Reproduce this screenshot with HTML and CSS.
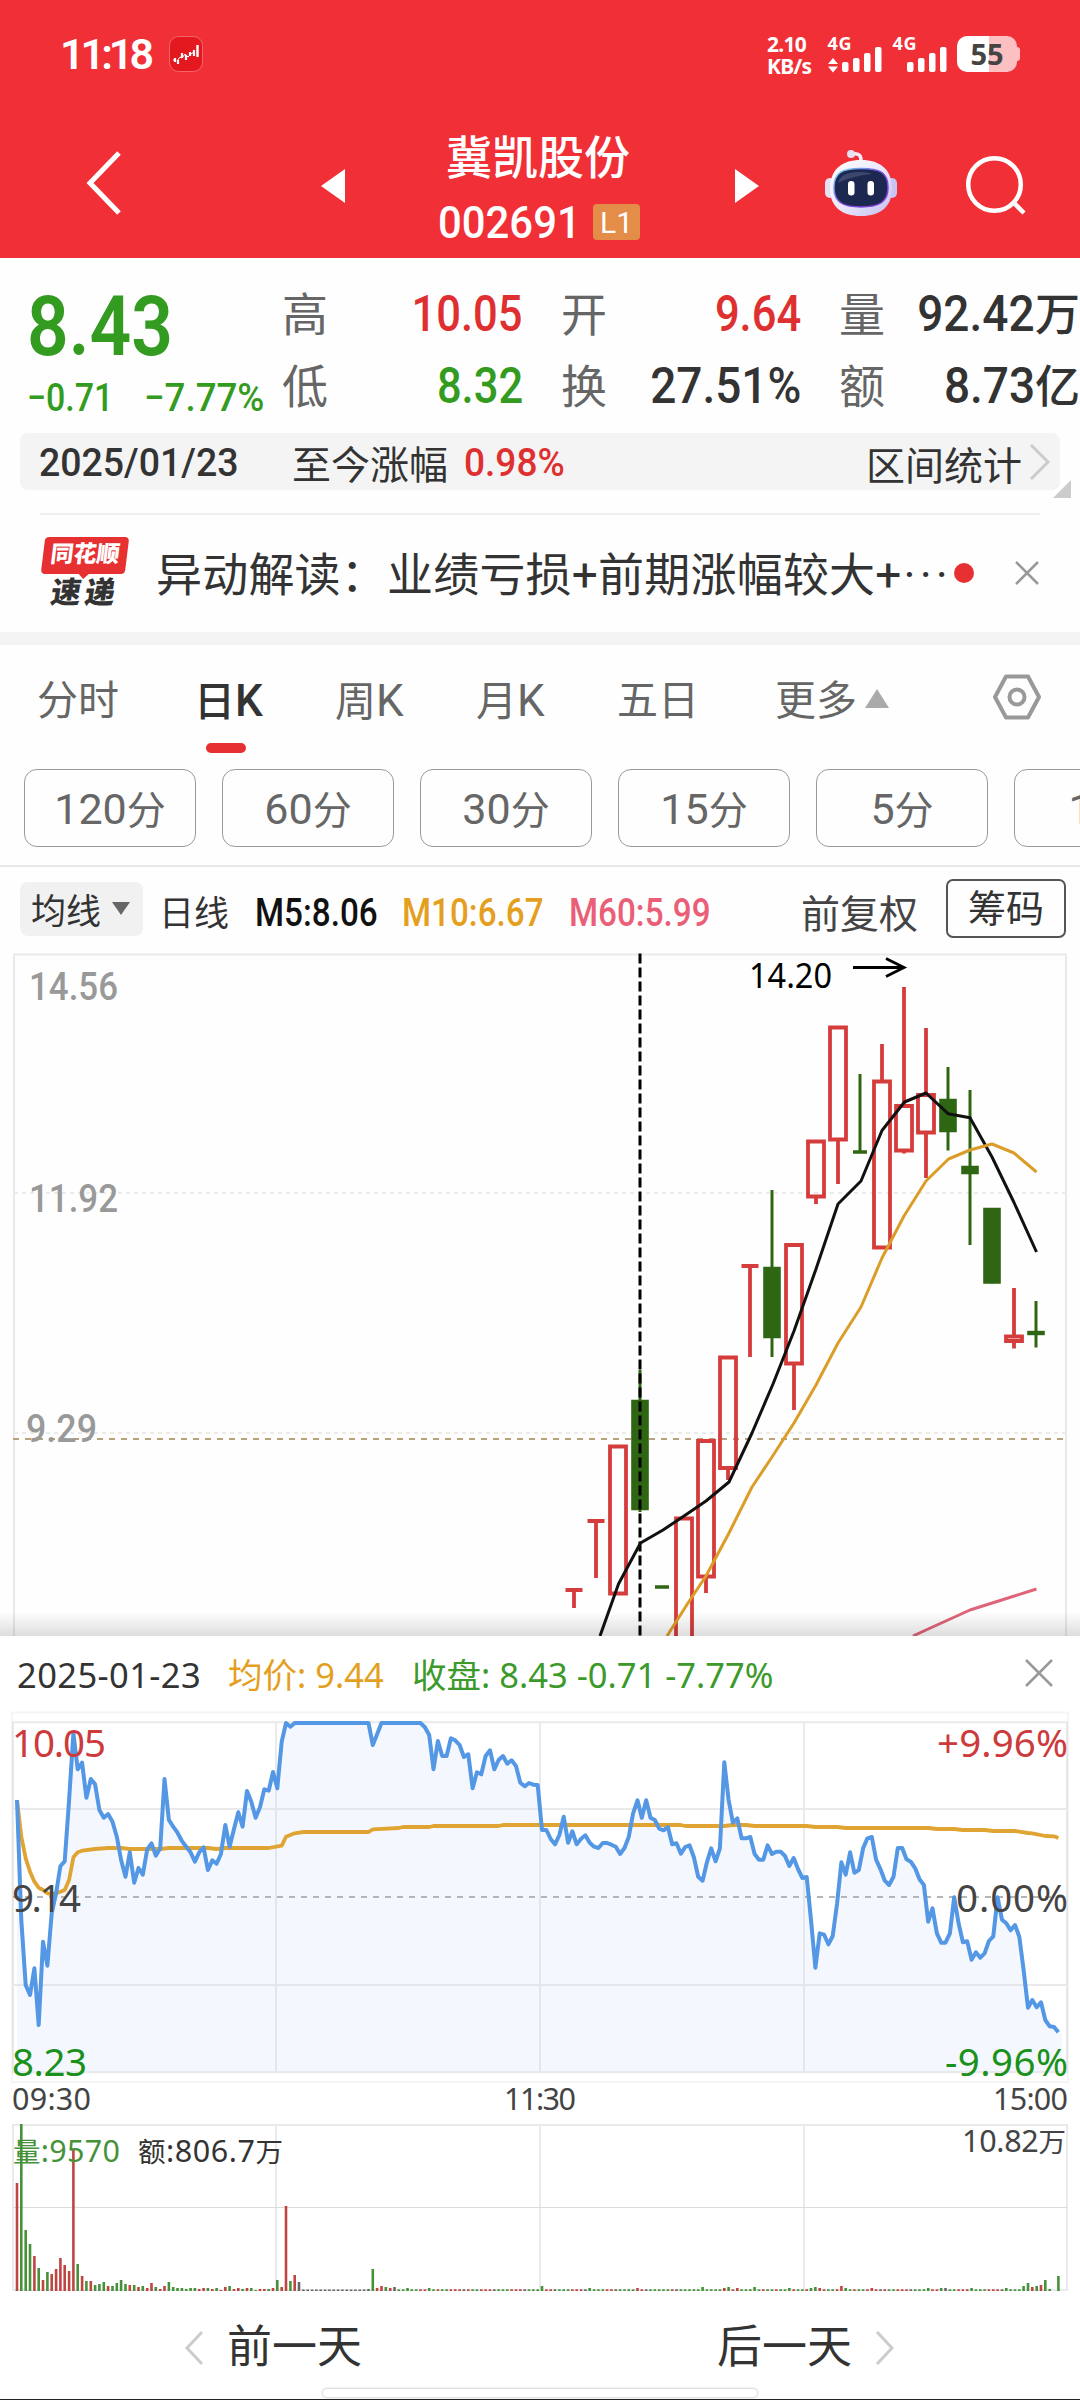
FILE: index.html
```
<!DOCTYPE html>
<html lang="zh-CN">
<head>
  <meta charset="UTF-8" />
  <meta name="viewport" content="width=device-width, initial-scale=1.0" />
  <title>冀凯股份 002691</title>
  <link rel="stylesheet" href="styles.css">
</head>
<body>
  <header class="header">
    <div class="status">
      <span class="clock">11:18</span>
      <svg class="app-icon" width="34" height="36" viewBox="0 0 34 36">
        <rect x="0.5" y="0.5" width="33" height="35" rx="9" fill="#e3191f" stroke="#f2666a"/>
        <path d="M4 24h3M8 25l3-4 2 1 3-4 3 3 3-3 3-2" fill="none" stroke="#fff" stroke-width="1"/>
        <path d="M6 22v4M9 24v4M13 17v5M17 19v5M21 16v4M25 14v6" stroke="#fff" stroke-width="2.2"/>
        <path d="M28.500 9v12" stroke="#fff" stroke-width="2.400" fill="none"/>
      </svg>
      <div class="speed"><span>2.10</span><span>KB/s</span></div>
      <svg class="signals" width="124" height="44" viewBox="826 32 124 44">
        <g fill="#fff">
          <text x="827.5" y="50" class="net" textLength="24">4G</text>
          <text x="892.5" y="50" class="net" textLength="24">4G</text>
          <path d="M828 64l5-6 5 6zM828 66.500l5 6 5-6z"/>
          <rect x="842" y="62" width="6.500" height="10" rx="2"/>
          <rect x="853" y="58" width="6.500" height="14" rx="2"/>
          <rect x="864" y="53" width="6.500" height="19" rx="2"/>
          <rect x="875" y="47" width="6.500" height="25" rx="2"/>
          <rect x="907" y="62" width="6.500" height="10" rx="2"/>
          <rect x="918" y="58" width="6.500" height="14" rx="2"/>
          <rect x="929" y="53" width="6.500" height="19" rx="2"/>
          <rect x="940" y="47" width="6.500" height="25" rx="2"/>
        </g>
      </svg>
      <div class="battery">55</div>
    </div>
    <div class="titlebar">
      <svg class="back" width="40" height="70" viewBox="0 0 40 70"><path d="M36 5L7 35l29 30" fill="none" stroke="#fff" stroke-width="5"/></svg>
      <svg class="prev" width="24" height="34"><path d="M24 0v34L0 17z" fill="#fff"/></svg>
      <div class="stock">
        <div class="stock-name">冀凯股份</div>
        <div class="stock-code"><span class="code">002691</span><span class="level">L1</span></div>
      </div>
      <svg class="next" width="24" height="34"><path d="M0 0v34l24-17z" fill="#fff"/></svg>
      <svg class="robot" width="74" height="68" viewBox="824 149 74 68">
        <defs>
          <linearGradient id="shell" x1="0" y1="0" x2="1" y2="1">
            <stop offset="0" stop-color="#fff"/><stop offset="0.5" stop-color="#ece8fa"/><stop offset="1" stop-color="#c3bdf0"/>
          </linearGradient>
          <linearGradient id="rim" x1="0" y1="0" x2="1" y2="1">
            <stop offset="0" stop-color="#6fe0f5"/><stop offset="0.5" stop-color="#7a4be0"/><stop offset="1" stop-color="#8a3bd8"/>
          </linearGradient>
        </defs>
        <path d="M852 154q10-2 9 8" fill="none" stroke="#f1ecfb" stroke-width="3.500"/>
        <circle cx="851" cy="154" r="4" fill="#e9dff3"/>
        <rect x="825" y="178" width="10" height="20" rx="5" fill="#e6e0f5"/>
        <rect x="887" y="178" width="10" height="20" rx="5" fill="#c9c4f2"/>
        <path d="M861 160c20 0 31 10 31 29 0 17-11 27-31 27s-31-10-31-27c0-19 11-29 31-29z" fill="url(#shell)"/>
        <path d="M861 168.500c19 0 27 4 27 19 0 14-8 19.500-27 19.500s-27-5.500-27-19.500c0-15 8-19 27-19z" fill="#1d2850" stroke="url(#rim)" stroke-width="1.500"/>
        <path d="M838 183q2-11 22-11 8 0 12 2-20 2-34 9z" fill="#4a547a" opacity="0.7"/>
        <rect x="848" y="181" width="6.500" height="14.500" rx="3.200" fill="#fff"/>
        <rect x="867.500" y="181" width="6.500" height="14.500" rx="3.200" fill="#fff"/>
      </svg>
      <svg class="search" width="62" height="62" viewBox="964 154 62 62"><g fill="none" stroke="#fff" stroke-width="4.500"><circle cx="994.500" cy="184.500" r="26.300"/><path d="M1013 202l11 11"/></g></svg>
    </div>
  </header>

  <section class="quote">
    <div class="price-box">
      <div class="price green"><span class="num">8.43</span></div>
      <div class="change green"><span class="num">−0.71</span><span class="num pct">−7.77%</span></div>
    </div>
    <div class="stats">
      <div class="stat"><label>高</label><b class="red num">10.05</b></div>
      <div class="stat"><label>开</label><b class="red num">9.64</b></div>
      <div class="stat"><label>量</label><b class="num wide">92.42</b><i>万</i></div>
      <div class="stat"><label>低</label><b class="green num">8.32</b></div>
      <div class="stat"><label>换</label><b class="num wide">27.51%</b></div>
      <div class="stat"><label>额</label><b class="num wide">8.73</b><i>亿</i></div>
    </div>
  </section>

  <div class="range">
    <span class="range-date">2025/01/23</span>
    <span class="range-label">至今涨幅</span>
    <span class="range-value red">0.98%</span>
    <span class="range-link">区间统计</span>
    <svg width="22" height="38" viewBox="0 0 22 38"><path d="M2 2l17 17L2 36" fill="none" stroke="#ccc" stroke-width="3"/></svg>
    <i class="corner"></i>
  </div>

  <div class="news">
    <div class="logo">
      <div class="logo-top">同花顺</div>
      <div class="logo-bottom">速递</div>
    </div>
    <span class="news-text">异动解读：业绩亏损+前期涨幅较大+<em>···</em></span>
    <i class="dot"></i>
    <svg width="24" height="24" viewBox="0 0 24 24"><path d="M1 1l22 22M23 1L1 23" stroke="#999" stroke-width="2.500"/></svg>
  </div>

  <nav class="tabs">
    <span class="tab t1">分时</span>
    <span class="tab t2 active">日<b>K</b></span>
    <span class="tab t3">周<b>K</b></span>
    <span class="tab t4">月<b>K</b></span>
    <span class="tab t5">五日</span>
    <span class="tab t6">更多<svg width="24" height="19"><path d="M12 0l12 19H0z" fill="#aaa"/></svg></span>
    <svg class="gear" width="50" height="48" viewBox="0 0 50 48"><g fill="none" stroke="#999"><path d="M14 3.500h22L47 24 36 44.500H14L3 24z" stroke-width="4" stroke-linejoin="round"/><circle cx="25" cy="24" r="7.500" stroke-width="4"/></g></svg>
  </nav>

  <div class="periods">
    <span><b>120</b>分</span><span><b>60</b>分</span><span><b>30</b>分</span><span><b>15</b>分</span><span><b>5</b>分</span><span><b>1</b>分</span>
  </div>

  <div class="ma-bar">
    <span class="ma-select">均线<svg width="18" height="13"><path d="M0 0h18L9 13z" fill="#666"/></svg></span>
    <span class="ma-name">日线</span>
    <span class="ma m5">M5:8.06</span>
    <span class="ma m10">M10:6.67</span>
    <span class="ma m60">M60:5.99</span>
    <span class="fq">前复权</span>
    <span class="chips">筹码</span>
  </div>

  <div class="kline">
    <svg id="kline" width="1080" height="688" viewBox="0 948 1080 688">
      <path class="frame" d="M14 1640V954.500h1052V1640"/>
      <path class="grid-dash" d="M14 1193h1052M14 1433h1052"/>
      <path class="cost" d="M13 1439h1053"/>
      <g class="axis">
        <text x="29" y="1000" textLength="89" lengthAdjust="spacingAndGlyphs">14.56</text>
        <text x="29" y="1212" textLength="89" lengthAdjust="spacingAndGlyphs">11.92</text>
        <text x="26" y="1442" textLength="71" lengthAdjust="spacingAndGlyphs">9.29</text>
      </g>
      <g id="candles"></g>
      <path class="cursor" d="M640 953.500V1636"/>
      <polyline class="line ma5" points="600,1636 618.5,1584 640.5,1543 663,1530 684,1516 706,1501 729,1482 752,1433 773,1384 794,1331 816,1269 838,1204 861,1181 882,1130.5 904.500,1102 926,1093 948,1113.7 970,1117.7 992,1157 1014,1202.5 1036.500,1252"/>
      <polyline class="line ma10" points="667,1636 688,1603 706,1576 729,1533 752,1487 772,1457 794,1423 816,1385 838,1343 861,1307 882,1258 904,1216 926,1181 948.500,1159 970,1150 992,1144 1014,1153 1036.500,1172"/>
      <polyline class="line ma60" points="913,1636 926,1630 970,1610 1036.500,1589"/>
      <text class="peak" x="749" y="988" textLength="83" lengthAdjust="spacingAndGlyphs">14.20</text>
      <path class="arrow" d="M853 967.500h50M886 958.500l18 9-18 9"/>
    </svg>
  </div>

  <section class="day">
    <div class="day-head">
      <span class="date">2025-01-23</span>
      <span class="avg">均价: 9.44</span>
      <span class="close-price">收盘: 8.43 -0.71 -7.77%</span>
      <svg width="28" height="28" viewBox="0 0 28 28"><path d="M1 1l26 26M27 1L1 27" stroke="#999" stroke-width="2.500"/></svg>
    </div>
    <svg id="intraday" width="1080" height="602" viewBox="0 1706 1080 602">
      <rect class="outer" x="12" y="1712.500" width="1056" height="369.500"/>
      <path id="area"/>
      <path class="frame" d="M13 1722.300h1054v350H13zM13 1809h1054M13 1985h1054M276 1722v350M540 1722v350M804 1722v350"/>
      <path class="zero" d="M13 1897h1054"/>
      <polyline id="avg-line"/>
      <polyline id="price-line"/>
      <g class="labels">
        <text class="up" x="12" y="1757" textLength="94">10.05</text>
        <text x="12" y="1911.500" textLength="69">9.14</text>
        <text class="down" x="12" y="2076" textLength="75">8.23</text>
        <text class="up" x="937" y="1757" textLength="131">+9.96%</text>
        <text x="956" y="1911.500" textLength="112">0.00%</text>
        <text class="down" x="945" y="2076" textLength="123">-9.96%</text>
      </g>
      <g class="times">
        <text x="12" y="2110" textLength="79">09:30</text>
        <text x="504" y="2110" textLength="72">11:30</text>
        <text x="993" y="2110" textLength="75">15:00</text>
      </g>
      <path class="frame" d="M13 2290V2125h1054v165zM276 2125v165M540 2125v165M804 2125v165"/>
      <path class="mid" d="M13 2207.500h1054"/>
      <g id="volume"></g>
      <g class="vol-text">
        <text x="13" y="2162" class="vol-green" textLength="107"><tspan class="cjk">量</tspan>:9570</text>
        <text x="138" y="2162" textLength="145"><tspan class="cjk">额</tspan>:806.7<tspan class="cjk">万</tspan></text>
        <text x="962" y="2152" class="vol-max" textLength="104"><tspan>10.82</tspan><tspan class="cjk">万</tspan></text>
      </g>
    </svg>
    <div class="pager">
      <span class="page"><svg width="20" height="36" viewBox="0 0 20 36"><path d="M18 2L3 18l15 16" fill="none" stroke="#ccc" stroke-width="3"/></svg>前一天</span>
      <span class="page">后一天<svg width="20" height="36" viewBox="0 0 20 36"><path d="M2 2l15 16L2 34" fill="none" stroke="#ccc" stroke-width="3"/></svg></span>
    </div>
    <div class="home"></div>
  </section>

  <script src="script.js"></script>
</body>
</html>
```
FILE: styles.css
```
* {
  box-sizing: border-box;
}
body {
  margin: 0;
  width: 1080px;
  height: 2400px;
  overflow: hidden;
  background: #fefefe;
  color: #333;
  font-family: Roboto, "Noto Sans CJK SC", sans-serif;
  display: flex;
  flex-direction: column;
}
svg {
  display: block;
  flex: none;
}
b, i, em {
  font-style: normal;
  font-weight: inherit;
}
span {
  white-space: nowrap;
}
.red { color: #df3031; }
.green { color: #339b20; }
.num {
  display: inline-block;
  transform: scaleX(0.87);
  transform-origin: right;
}

/* header */
.header {
  height: 258px;
  flex: none;
  background: #f12f37;
  color: #fff;
}
.status {
  height: 108px;
  padding: 0 63px 0 60px;
  display: flex;
  align-items: center;
}
.clock {
  width: 109px;
  font-size: 43px;
  font-weight: 600;
  letter-spacing: -4px;
}
.speed {
  display: flex;
  flex-direction: column;
  margin: 1px 13px 0 auto;
  width: 46px;
  font: 700 21px/22px "Noto Sans", sans-serif;
  letter-spacing: -0.7px;
}
.net {
  font: 700 18px "Noto Sans", sans-serif;
}
.signals {
  margin-right: 7px;
}
.battery {
  width: 60px;
  height: 36px;
  border-radius: 10px;
  background: linear-gradient(90deg, #fff 53%, #fcbfc2 53%);
  color: #444;
  font: 700 29px/36px "Noto Sans", sans-serif;
  text-align: center;
  position: relative;
}
.battery::after {
  content: "";
  position: absolute;
  left: 60px;
  top: 11px;
  width: 3px;
  height: 14px;
  background: #fcbfc2;
  border-radius: 0 3px 3px 0;
}
.titlebar {
  height: 150px;
  display: flex;
  align-items: center;
  padding: 0 54px 0 83px;
}
.back { margin-right: 198px; }
.prev { margin: 6px 88px 0 0; }
.stock {
  width: 210px;
  padding-top: 16px;
  text-align: center;
}
.stock-name {
  font-size: 46px;
  line-height: 64px;
  margin-top: -2px;
  font-weight: 500;
}
.stock-code {
  display: flex;
  align-items: center;
  height: 64px;
  margin-left: 5px;
}
.code {
  font-size: 45px;
  font-weight: 500;
  width: 155px;
  text-align: left;
  transform: scaleX(0.93);
  transform-origin: left;
}
.level {
  width: 47px;
  height: 36px;
  border-radius: 4px;
  background: #e38d48;
  font-size: 30px;
  line-height: 37px;
}
.next { margin: 6px 0 0 92px; }
.robot { margin: 0 66px 0 auto; }
.search { margin-top: 4px; }

/* quote */
.quote {
  height: 175px;
  flex: none;
  display: flex;
}
.price-box {
  width: 283px;
  padding: 19px 0 0 27px;
}
.price-box .num {
  transform-origin: left;
}
.price {
  font-size: 84px;
  line-height: 100px;
  font-weight: 600;
}
.change {
  font-size: 39px;
  line-height: 44px;
  margin-top: -1px;
  display: flex;
  font-weight: 500;
}
.change .num {
  width: 117px;
}
.change .pct {
  transform: scaleX(0.94);
}
.stats {
  flex: 1;
  display: grid;
  grid-template-columns: 240px 239px 240px;
  grid-template-rows: 72px 72px;
  column-gap: 39px;
  padding-top: 20px;
}
.stat {
  display: flex;
  align-items: center;
  font-size: 50px;
}
.stat label {
  font-size: 46px;
  color: #666;
  margin: -6px auto 0 -1px;
}
.stat b {
  font-weight: 500;
}
.stat .wide {
  transform: scaleX(0.92);
}
.stat i {
  font-size: 45px;
  font-weight: 500;
  margin-top: -5px;
}

/* date range bar */
.range {
  position: relative;
  flex: none;
  height: 57px;
  margin: 0 20px;
  padding: 0 9px 0 19px;
  border-radius: 8px;
  background: #f4f4f4;
  display: flex;
  align-items: center;
  font-size: 39px;
}
.range-date {
  width: 253px;
  padding-top: 2px;
  font-weight: 500;
  transform: scaleX(0.96);
  transform-origin: left;
}
.range-label { width: 171px; }
.range-value {
  padding-top: 2px;
  font-weight: 500;
  transform: scaleX(0.95);
  transform-origin: left;
  margin-left: 1px;
}
.range-link {
  margin: 2px 7px 0 auto;
}
.corner {
  position: absolute;
  right: -11px;
  bottom: -8px;
  width: 18px;
  height: 18px;
  background: #ccc;
  clip-path: polygon(100% 0, 100% 100%, 0 100%);
}

/* news */
.news {
  flex: none;
  height: 119px;
  margin: 23px 40px 0;
  border-top: 2px solid #eee;
  display: flex;
  align-items: center;
}
.logo {
  width: 90px;
  margin-right: 26px;
}
.logo-top {
  position: relative;
  height: 37px;
  width: 84px;
  margin: 0 0 2px 3px;
  border-radius: 4px;
  background: #e63031;
  color: #fff;
  transform: skewX(-7deg);
  font-weight: 900;
  font-size: 23px;
  line-height: 35px;
  text-align: center;
}
.logo-top::after {
  content: "";
  position: absolute;
  left: 37px;
  top: 36px;
  width: 12px;
  height: 6px;
  background: #e63031;
  clip-path: polygon(0 0, 100% 0, 50% 100%);
}
.logo-bottom {
  font-weight: 900;
  font-size: 30px;
  line-height: 34px;
  letter-spacing: 4px;
  margin-left: 11px;
  transform: skewX(-9deg);
}
.news-text {
  font-size: 46px;
  letter-spacing: 0.2px;
  width: 798px;
  margin-top: -6px;
}
.news-text em {
  letter-spacing: 4px;
  margin-left: 2px;
}
.dot {
  width: 20px;
  height: 20px;
  flex: none;
  border-radius: 50%;
  background: #e63031;
  margin: -2px auto 0 0;
}
.news svg { margin: -2px 1px 0 0; }

/* tabs */
.tabs {
  flex: none;
  height: 121px;
  border-top: 13px solid #f4f4f4;
  padding: 0 38px 0 37px;
  display: flex;
  align-items: center;
  color: #666;
}
.tab {
  position: relative;
  font-size: 41px;
  line-height: 60px;
  margin-top: 4px;
}
.tab b {
  font-size: 44px;
}
.t1 { width: 157px; }
.t2 { width: 141px; }
.t3 { width: 141px; }
.t4 { width: 141px; }
.t5 { width: 158px; }
.t6 { display: flex; align-items: center; gap: 8px; }
.t6 svg { margin-bottom: 6px; }
.active {
  color: #333;
  font-weight: 500;
}
.active::after {
  content: "";
  position: absolute;
  left: 12px;
  top: 72px;
  width: 40px;
  height: 10px;
  border-radius: 5px;
  background: #e63031;
}
.gear { margin: -4px 0 0 auto; }

/* minute periods */
.periods {
  flex: none;
  height: 114px;
  padding: 16px 0 0 24px;
  border-bottom: 2px solid #e8e8e8;
  display: flex;
  align-items: flex-start;
  gap: 26px;
  overflow: hidden;
}
.periods span {
  flex: none;
  width: 172px;
  height: 78px;
  border: 1.5px solid #999;
  border-radius: 13px;
  font-size: 39px;
  line-height: 79px;
  text-align: center;
  color: #666;
}
.periods b {
  font-size: 43px;
}

/* moving averages */
.ma-bar {
  flex: none;
  height: 81px;
  padding: 2px 14px 0 20px;
  display: flex;
  align-items: center;
  font-size: 35px;
}
.ma-select {
  display: flex;
  align-items: center;
  gap: 11px;
  width: 123px;
  height: 54px;
  padding-left: 11px;
  margin-right: 16px;
  border-radius: 8px;
  background: #f1f1f1;
}
.ma-name {
  width: 96px;
  margin-top: 4px;
}
.ma {
  font-size: 38px;
  font-weight: 500;
  width: 147px;
  margin-top: 8px;
  transform: scaleX(0.875);
  transform-origin: left;
}
.m5 { color: #111; }
.m10 { color: #e49f1f; width: 167px; }
.m60 { color: #ea5f77; }
.fq {
  font-size: 39px;
  margin: 4px 28px 0 auto;
  color: #444;
}
.chips {
  width: 120px;
  height: 59px;
  border: 2px solid #555;
  border-radius: 7px;
  font-size: 38px;
  line-height: 56px;
  text-align: center;
}

/* daily K chart */
.kline {
  flex: none;
  height: 688px;
  position: relative;
}
.kline::after {
  content: "";
  position: absolute;
  left: 0;
  right: 0;
  bottom: 0;
  height: 24px;
  background: linear-gradient(rgba(0,0,0,0), rgba(0,0,0,0.13));
}
.frame {
  fill: none;
  stroke: rgba(200,200,205,0.38);
  stroke-width: 2;
}
.grid-dash {
  stroke: #ebebeb;
  stroke-width: 2;
  stroke-dasharray: 4 4;
}
.cost {
  stroke: #b9a27c;
  stroke-width: 2;
  stroke-dasharray: 6 6;
}
.axis text {
  font: 500 39px Roboto, sans-serif;
  fill: #999;
}
.cursor {
  stroke: #000;
  stroke-width: 3;
  stroke-dasharray: 10 4;
}
.line {
  fill: none;
  stroke-width: 3;
  stroke-linejoin: round;
}
.ma5 { stroke: #111; }
.ma10 { stroke: #dc9d28; }
.ma60 { stroke: #e06478; }
.c-red { fill: none; stroke: #d53c3c; stroke-width: 3.8; }
.c-green { fill: #2f6614; stroke: #2f6614; stroke-width: 3.6; }
.c-green.wick { stroke-width: 3; }
.peak {
  font: 34px "Noto Sans", sans-serif;
  fill: #000;
}
.arrow {
  fill: none;
  stroke: #000;
  stroke-width: 2.8;
}

/* single day panel */
.day {
  flex: none;
  height: 764px;
  background: #fff;
  position: relative;
}
.day-head {
  height: 70px;
  padding: 8px 27px 0 17px;
  display: flex;
  align-items: center;
  font: 34.500px/50px "Noto Sans", "Noto Sans CJK SC", sans-serif;
}
.date {
  width: 211px;
  letter-spacing: 0.4px;
}
.avg { width: 184px; color: #e49f1f; }
.close-price { color: #3c9a2b; }
.day-head svg { margin: -5px 0 0 auto; }
.outer {
  fill: none;
  stroke: #f5f5f5;
  stroke-width: 2;
}
#area { fill: #f4f8fe; }
#price-line, #avg-line {
  fill: none;
  stroke-width: 4;
  stroke-linejoin: round;
}
#price-line { stroke: #5397e5; }
#avg-line { stroke: #e0a433; stroke-width: 3.8; }
.zero {
  stroke: #9a9da1;
  stroke-width: 1.7;
  stroke-dasharray: 6 6;
}
.labels text {
  font: 38.5px "Noto Sans", sans-serif;
  fill: #444;
}
.labels .up { fill: #cd3a3c; }
.labels .down { fill: #1a911a; }
.times text {
  font: 30.500px "Noto Sans", sans-serif;
  fill: #444;
}
.mid {
  stroke: #dcdcdc;
  stroke-width: 1;
}
.v-r { stroke: #bf4543; }
.v-g { stroke: #46923a; }
.v-k { stroke: #666; }
#volume path { stroke-width: 2.6; }
.vol-text text {
  font: 30.500px "Noto Sans", "Noto Sans CJK SC", sans-serif;
  fill: #333;
}
.vol-text .cjk { font-size: 27.5px; }
.vol-text .vol-green { fill: #46923a; }
.vol-text .vol-max { fill: #444; }
.pager {
  height: 78px;
  display: flex;
  justify-content: space-between;
  padding: 1px 185px 0 184px;
  font-size: 45px;
  line-height: 80px;
}
.page {
  display: flex;
  align-items: center;
  gap: 23px;
}
.home {
  position: absolute;
  left: 323px;
  top: 753px;
  width: 434px;
  height: 8px;
  border-radius: 4px;
  background: #fff;
  box-shadow: 0 0 3px rgba(0,0,0,0.35);
}
.day::after {
  content: "";
  position: absolute;
  left: 0;
  right: 0;
  bottom: 0;
  height: 1px;
  background: #222;
}
```
FILE: script.js
```
const NS = "http://www.w3.org/2000/svg";

function addPath(parent, d, cls) {
  const p = document.createElementNS(NS, "path");
  p.setAttribute("d", d);
  p.setAttribute("class", cls);
  parent.appendChild(p);
}

// x, color, high, body top, body bottom, low
const candles = [
  [574, "r", 1590, 1590, 1590, 1608],
  [596, "r", 1521, 1521, 1521, 1578],
  [618, "r", 1446.5, 1446.5, 1593.5, 1593.5],
  [640, "g", 1370, 1400, 1510, 1512],
  [662, "g", 1587, 1585.4, 1588.6, 1587],
  [684, "r", 1518.5, 1518.5, 1650, 1650],
  [706, "r", 1441, 1441, 1576.5, 1593],
  [728, "r", 1357.5, 1357.5, 1468, 1480],
  [750, "r", 1266, 1266, 1266, 1357],
  [772, "g", 1190, 1267, 1338, 1357],
  [794, "r", 1245, 1245, 1363.5, 1410],
  [816, "r", 1141.5, 1141.5, 1196.5, 1204],
  [838, "r", 1027.5, 1027.5, 1139.5, 1184],
  [860, "g", 1074, 1150.4, 1153, 1152],
  [882, "r", 1044, 1081.5, 1247.5, 1247.5],
  [904, "r", 987, 1106, 1150.5, 1153.5],
  [926, "r", 1028, 1095, 1132.5, 1178],
  [948, "g", 1067, 1099, 1132, 1150.5],
  [970, "g", 1090, 1166, 1174, 1245],
  [992, "g", 1208, 1208, 1283.5, 1283.5],
  [1014, "r", 1288, 1336.5, 1341, 1348.5],
  [1036, "g", 1301, 1331, 1335, 1347.5]
];

const candleBox = document.getElementById("candles");
candles.forEach(([x, c, high, top, bottom, low]) => {
  if (c === "r") {
    const body = top === bottom
      ? `M${x - 8.5} ${top}h17`
      : `M${x - 8} ${top}h16V${bottom}h-16z`;
    addPath(candleBox, `${body}M${x} ${high}V${top}M${x} ${bottom}V${low}`, "c-red");
  } else {
    addPath(candleBox, `M${x} ${high}V${low}`, "c-green wick");
    addPath(candleBox, `M${x - 7} ${top + 1.6}h14V${Math.max(bottom - 1.6, top + 1.6)}h-14z`, "c-green");
  }
});

// minute prices, one value per minute, three units per pixel
const flat = (n) => Array(n).fill(309);
const prices = [
  540, 900, 1095, 1125, 1045, 1215, 965, 1037, 880, 820, 738, 724, 540, 340, 448, 428, 533, 477, 493, 570,
  593, 582, 605, 650, 720, 770, 697, 788, 744, 764, 688, 670, 707, 685, 477, 600, 620, 638, 663, 680,
  697, 725, 697, 682, 750, 721, 731, 702, 615, 680, 627, 577, 620, 513, 545, 593, 562, 508, 512, 456,
  505, 365, 309, 320, ...flat(18), 375, 343, ...flat(10), 322, 345, 448, 363, 408, 408,
  355, 361, 375, 411, 403, 505, 457, 463, 408, 391, 448, 420, 408, 431, 421, 438, 488, 499, 489, 494,
  495, 630, 630, 657, 673, 645, 590, 668, 634, 673, 656, 646, 668, 680, 684, 669, 669, 674, 680, 702,
  684, 650, 580, 541, 593, 541, 593, 600, 626, 631, 621, 673, 670, 701, 681, 676, 712, 770, 782, 727,
  685, 724, 685, 427, 540, 608, 595, 655, 655, 651, 702, 719, 719, 676, 702, 695, 695, 708, 738, 714,
  747, 774, 771, 900, 1043, 940, 944, 973, 948, 850, 727, 764, 697, 758, 750, 685, 655, 651, 719, 748,
  782, 795, 770, 684, 684, 718, 725, 745, 778, 795, 905, 865, 940, 968, 968, 940, 832, 910, 967, 964,
  1019, 997, 1013, 1000, 963, 949, 832, 899, 910, 931, 915, 950, 1050, 1163, 1140, 1162, 1147, 1200, 1219, 1221,
  1237
];

const average = [
  [0, 540], [1, 650], [2, 715], [3, 755], [4, 785], [5, 803], [6, 810], [7, 820], [8, 822], [9, 820],
  [10, 815], [11, 810], [12, 780], [13, 712], [14, 697], [15, 692], [18, 687], [21, 684], [24, 684],
  [26, 687], [33, 687], [35, 684], [44, 684], [46, 687], [48, 684], [58, 684], [61, 677], [62, 650],
  [64, 640], [66, 636], [81, 636], [82, 628], [88, 624], [89, 621], [95, 621], [96, 618], [111, 618],
  [112, 615], [153, 615], [154, 618], [163, 618], [165, 615], [168, 615], [170, 618], [182, 618],
  [184, 621], [189, 621], [191, 624], [210, 624], [212, 627], [216, 627], [218, 630], [223, 630],
  [225, 633], [230, 633], [233, 639], [234, 640], [237, 648], [239, 649], [240, 654]
];

const px = (n) => (17 + n * 4.339).toFixed(1);
const py = (v) => (1620 + v / 3).toFixed(1);

const pricePoints = prices.map((v, n) => `${px(n)},${py(v)}`).join(" ");
document.getElementById("price-line").setAttribute("points", pricePoints);
document.getElementById("avg-line").setAttribute("points", average.map(([n, v]) => `${px(n)},${py(v)}`).join(" "));
document.getElementById("area").setAttribute("d", `M17 2072L${pricePoints} L1062 2034V2072z`);

// volume: color letter + bar height
const opening = "r108 g167 g61 g47 r35 g23 r11 g19 r17 r22 r33 r26 r20 r142 g27 r15 g10 r10 g6 g7 g9 r5 g5 g8 g11 g7 r6 g6 r4 g5 r3 r8 g4 r2 r5 g9 g4 g3 g3 g2 g3 g3 r2 r3 g3 r2 g3 r1 r4 g5 r2 r3 g2 r3 g3 g1 r2 r2 g2 r3 g11 r4 r85 g10 r16 k9".split(" ");
const later = {
  81: "k2", 82: "g22", 83: "r3", 84: "r5", 85: "g4", 86: "r3", 87: "k4", 90: "g3", 95: "g3", 121: "g5", 132: "g3",
  143: "r3", 158: "g4", 163: "r3", 164: "g4", 166: "r3", 170: "g4", 178: "g3", 183: "g3", 184: "g4", 185: "r3",
  190: "r5", 191: "g3", 197: "r3", 210: "g3", 213: "g3", 214: "k3", 220: "g3", 228: "g3", 232: "g5", 233: "g8",
  234: "r4", 235: "g5", 236: "r6", 237: "g11", 238: "g2", 239: "g0", 240: "g15"
};
const quiet = "grgggrrgrggk";
const volumeBox = document.getElementById("volume");
for (let n = 0; n <= 240; n++) {
  let bar = opening[n] || later[n];
  if (!bar) bar = n < 82 ? "k1.5" : quiet[(n * 5 + (n >> 3)) % quiet.length] + "1.7";
  addPath(volumeBox, `M${px(n)} 2291v-${bar.slice(1)}`, "v-" + bar[0]);
}
```
